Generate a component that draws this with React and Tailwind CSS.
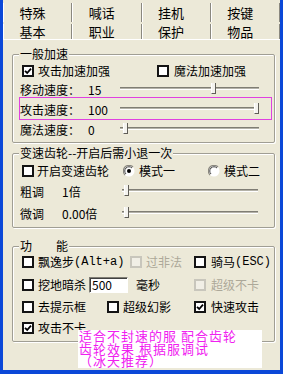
import React from "react";

function Check({ checked, disabled }) {
  return (
    <span
      className={
        disabled
          ? "w-[12px] h-[12px] shrink-0 border-2 border-[#c8c6bc] bg-[#f1efe6] inline-block"
          : "w-[12px] h-[12px] shrink-0 border-2 border-[#141414] bg-white inline-flex items-center justify-center"
      }
    >
      {checked && (
        <svg width="8" height="8" viewBox="0 0 8 8">
          <path d="M1 3.8 L3.2 6 L7 1.6" stroke="#000" strokeWidth="1.8" fill="none" />
        </svg>
      )}
    </span>
  );
}

function Radio({ on }) {
  return (
    <svg width="12" height="12" viewBox="0 0 12 12" className="shrink-0">
      <circle cx="6" cy="6" r="5.5" fill="#fff" />
      <path d="M10 2 A5.5 5.5 0 0 0 2 10" stroke="#8a887f" strokeWidth="1.2" fill="none" />
      <path d="M9 3 A4.2 4.2 0 0 0 3 9" stroke="#404040" strokeWidth="1" fill="none" />
      {on && <circle cx="6" cy="6" r="2" fill="#000" />}
    </svg>
  );
}

function Slider({ className, pos }) {
  return (
    <div className={"relative h-[16px] " + className}>
      <div className="absolute left-0 right-0 top-[5px] h-[3px] border-t border-t-[#7f7d74] border-b border-b-white bg-[#b4b2a8]" />
      <div
        className="absolute top-[1px] w-[5px] h-[11px] bg-[#f4f3ee] border-r border-r-[#5f5d56] border-b border-b-[#5f5d56] border-l border-l-white"
        style={{ left: pos }}
      />
    </div>
  );
}

function Group({ title, className, children }) {
  return (
    <div
      className={
        "ml-[9px] w-[263px] flex flex-col border border-[#a09e94] rounded-[2px] shadow-[1px_1px_0_#fff,inset_1px_1px_0_#fff] " +
        className
      }
    >
      <span className="-mt-[7px] ml-[6px] w-fit px-[1px] bg-[#ece9d8] leading-[12px] whitespace-pre">
        {title}
      </span>
      {children}
    </div>
  );
}

const tabCell =
  "flex items-center justify-center pr-[10px] border-l border-l-white border-r border-r-[#8a887f]";

export default function App() {
  return (
    <div className="relative w-[283px] h-[374px] overflow-hidden bg-[#0b48d8] pl-[3px] pr-[3px] pb-[4px] font-['Noto_Sans_CJK_SC',sans-serif] text-[12px] leading-[12px] text-black">
      <div className="h-full bg-[#ece9d8] flex flex-col">
        <div className="grid grid-cols-4 h-[22px] pt-[3px] text-[13px] leading-[13px]">
          <div className={tabCell}>特殊</div>
          <div className={tabCell}>喊话</div>
          <div className={tabCell}>挂机</div>
          <div className={tabCell}>按键</div>
        </div>
        <div className="grid grid-cols-4 h-[17px] pt-[2px] text-[13px] leading-[13px]">
          <div className={tabCell}>基本</div>
          <div className={tabCell}>职业</div>
          <div className={tabCell}>保护</div>
          <div className={tabCell}>物品</div>
        </div>

        <div className="flex-1 border-t border-white flex flex-col pt-[14px]">
          <Group title="一般加速" className="pb-[2px]">
            <div className="h-[22px] flex items-center pl-[9px]">
              <div className="w-[135px] flex items-center">
                <Check checked />
                <span className="ml-[4px]">攻击加速加强</span>
              </div>
              <Check />
              <span className="ml-[5px]">魔法加速加强</span>
            </div>
            <div className="h-[15px] flex items-center pl-[7px]">
              <span className="w-[68px]">移动速度：</span>
              <span className="w-[32px]">15</span>
              <Slider className="w-[139px]" pos={91} />
            </div>
            <div className="h-[23px] ml-[6px] mr-[2px] border border-[#e040e0] flex items-center pt-[2px]">
              <span className="w-[68px]">攻击速度：</span>
              <span className="w-[32px]">100</span>
              <Slider className="w-[139px]" pos={134} />
            </div>
            <div className="h-[20px] flex items-center pl-[7px]">
              <span className="w-[68px]">魔法速度：</span>
              <span className="w-[32px]">0</span>
              <Slider className="w-[139px]" pos={3} />
            </div>
          </Group>

          <Group title="变速齿轮--开启后需小退一次" className="mt-[10px]">
            <div className="h-[24px] flex items-center pl-[9px]">
              <div className="w-[101px] flex items-center">
                <Check />
                <span className="ml-[3px]">开启变速齿轮</span>
              </div>
              <div className="w-[85px] flex items-center">
                <Radio on />
                <span className="ml-[4px]">模式一</span>
              </div>
              <Radio />
              <span className="ml-[4px]">模式二</span>
            </div>
            <div className="h-[18px] flex items-center pl-[7px]">
              <span className="w-[42px]">粗调</span>
              <span className="w-[60px]">1倍</span>
              <Slider className="w-[136px]" pos={2} />
            </div>
            <div className="h-[26px] flex items-center pl-[7px]">
              <span className="w-[42px]">微调</span>
              <span className="w-[60px]">0.00倍</span>
              <Slider className="w-[136px]" pos={2} />
            </div>
          </Group>

          <Group title="功　　能" className="mt-[18px] pb-[1px]">
            <div className="h-[20px] flex items-center pl-[9px]">
              <div className="w-[108px] flex items-center">
                <Check />
                <span className="ml-[4px]">飘逸步</span>
                <span className="font-['Liberation_Mono',monospace] text-[12px]">(Alt+a)</span>
              </div>
              <div className="w-[64px] flex items-center text-[#aca899]">
                <Check disabled />
                <span className="ml-[4px]">过非法</span>
              </div>
              <Check />
              <span className="ml-[5px]">骑马</span>
              <span className="font-['Liberation_Mono',monospace] text-[12px]">(ESC)</span>
            </div>
            <div className="h-[26px] flex items-center pl-[9px]">
              <div className="w-[67px] flex items-center">
                <Check />
                <span className="ml-[4px]">挖地暗杀</span>
              </div>
              <div className="w-[105px] flex items-center">
                <span className="w-[39px] h-[16px] bg-white border-t border-l border-[#7f7d74] border-b border-r border-b-white border-r-white shadow-[inset_1px_1px_0_#404040] flex items-center pl-[2px]">
                  500
                </span>
                <span className="ml-[8px]">毫秒</span>
              </div>
              <Check disabled />
              <span className="ml-[5px] text-[#aca899]">超级不卡</span>
            </div>
            <div className="h-[18px] flex items-center pl-[9px]">
              <div className="w-[85px] flex items-center">
                <Check />
                <span className="ml-[4px]">去提示框</span>
              </div>
              <div className="w-[87px] flex items-center">
                <Check />
                <span className="ml-[4px]">超级幻影</span>
              </div>
              <Check checked />
              <span className="ml-[5px]">快速攻击</span>
            </div>
            <div className="h-[24px] flex items-center pl-[9px]">
              <Check checked />
              <span className="ml-[4px]">攻击不卡</span>
            </div>
          </Group>
        </div>
      </div>

      <div className="absolute left-[78px] top-[330px] w-[184px] h-[38px] bg-white pl-[1px] text-[13px] leading-[12.5px] tracking-[1px] text-[#f020f0] whitespace-pre">
        {"适合不封速的服 配合齿轮\n齿轮效果 根据服调试\n（冰天推荐）"}
      </div>
    </div>
  );
}
